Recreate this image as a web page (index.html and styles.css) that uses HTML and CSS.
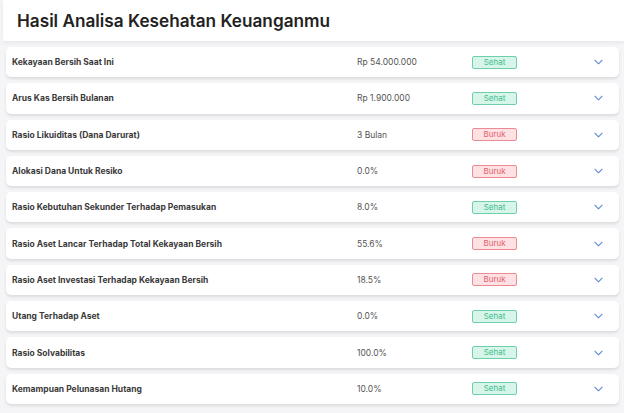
FILE: index.html
```html
<!DOCTYPE html>
<html lang="id">
<head>
<meta charset="utf-8">
<link rel="stylesheet" href="styles.css">
</head>
<body>
<div class="page">
  <header class="head"><h1 class="title">Hasil Analisa Kesehatan Keuanganmu</h1></header>
  <ul class="list">
    <li class="row"><span class="label">Kekayaan Bersih Saat Ini</span><span class="value">Rp 54.000.000</span><span class="cell"><span class="badge good">Sehat</span></span><span class="chev"><svg viewBox="0 0 10 6" width="9" height="6"><path d="M1 1l4 4 4-4" /></svg></span></li>
    <li class="row"><span class="label">Arus Kas Bersih Bulanan</span><span class="value">Rp 1.900.000</span><span class="cell"><span class="badge good">Sehat</span></span><span class="chev"><svg viewBox="0 0 10 6" width="9" height="6"><path d="M1 1l4 4 4-4" /></svg></span></li>
    <li class="row"><span class="label">Rasio Likuiditas (Dana Darurat)</span><span class="value">3 Bulan</span><span class="cell"><span class="badge bad">Buruk</span></span><span class="chev"><svg viewBox="0 0 10 6" width="9" height="6"><path d="M1 1l4 4 4-4" /></svg></span></li>
    <li class="row"><span class="label">Alokasi Dana Untuk Resiko</span><span class="value">0.0%</span><span class="cell"><span class="badge bad">Buruk</span></span><span class="chev"><svg viewBox="0 0 10 6" width="9" height="6"><path d="M1 1l4 4 4-4" /></svg></span></li>
    <li class="row"><span class="label">Rasio Kebutuhan Sekunder Terhadap Pemasukan</span><span class="value">8.0%</span><span class="cell"><span class="badge good">Sehat</span></span><span class="chev"><svg viewBox="0 0 10 6" width="9" height="6"><path d="M1 1l4 4 4-4" /></svg></span></li>
    <li class="row"><span class="label">Rasio Aset Lancar Terhadap Total Kekayaan Bersih</span><span class="value">55.6%</span><span class="cell"><span class="badge bad">Buruk</span></span><span class="chev"><svg viewBox="0 0 10 6" width="9" height="6"><path d="M1 1l4 4 4-4" /></svg></span></li>
    <li class="row"><span class="label">Rasio Aset Investasi Terhadap Kekayaan Bersih</span><span class="value">18.5%</span><span class="cell"><span class="badge bad">Buruk</span></span><span class="chev"><svg viewBox="0 0 10 6" width="9" height="6"><path d="M1 1l4 4 4-4" /></svg></span></li>
    <li class="row"><span class="label">Utang Terhadap Aset</span><span class="value">0.0%</span><span class="cell"><span class="badge good">Sehat</span></span><span class="chev"><svg viewBox="0 0 10 6" width="9" height="6"><path d="M1 1l4 4 4-4" /></svg></span></li>
    <li class="row"><span class="label">Rasio Solvabilitas</span><span class="value">100.0%</span><span class="cell"><span class="badge good">Sehat</span></span><span class="chev"><svg viewBox="0 0 10 6" width="9" height="6"><path d="M1 1l4 4 4-4" /></svg></span></li>
    <li class="row"><span class="label">Kemampuan Pelunasan Hutang</span><span class="value">10.0%</span><span class="cell"><span class="badge good">Sehat</span></span><span class="chev"><svg viewBox="0 0 10 6" width="9" height="6"><path d="M1 1l4 4 4-4" /></svg></span></li>
  </ul>
</div>
</body>
</html>
```
FILE: styles.css
```css
* { box-sizing: border-box; }
html, body { margin: 0; padding: 0; }
body {
  background: #f5f5f7;
  font-family: "Inter", "Open Sans", sans-serif;
  color: #333;
}
.page {
  width: 624px;
  height: 413px;
  overflow: hidden;
  padding-left: 3px;
}
.head {
  height: 41px;
  background: #fff;
  box-shadow: 0 2px 4px rgba(0,0,0,0.06);
  display: flex;
  align-items: center;
  padding-left: 14px;
}
.title {
  margin: 0;
  font-size: 17.2px;
  font-weight: 600;
  color: #222;
  padding-bottom: 1px;
}
.list {
  list-style: none;
  margin: 0;
  padding: 6px 5px 0 3px;
  display: flex;
  flex-direction: column;
  gap: 6px;
}
.row {
  height: 30.3px;
  background: #fff;
  border-radius: 5px;
  box-shadow: 0 2px 3px rgba(0,0,0,0.10);
  display: flex;
  align-items: center;
  padding-left: 6px;
  font-size: 8.5px;
}
.label {
  width: 345px;
  font-weight: 700;
  color: #3a3a3a;
}
.value {
  width: 115px;
  color: #555;
}
.cell { width: 122px; }
.badge {
  display: inline-block;
  width: 45px;
  height: 13px;
  line-height: 11px;
  text-align: center;
  border-radius: 2px;
  font-size: 8px;
}
.good { background: #d8f5ea; border: 1px solid #6ed0aa; color: #3dbf8c; }
.bad { background: #fde1e3; border: 1px solid #ee8a93; color: #e5606c; }
.chev svg { display: block; }
.chev path { fill: none; stroke: #5a89d4; stroke-width: 1.2; stroke-linecap: round; stroke-linejoin: round; }
```
